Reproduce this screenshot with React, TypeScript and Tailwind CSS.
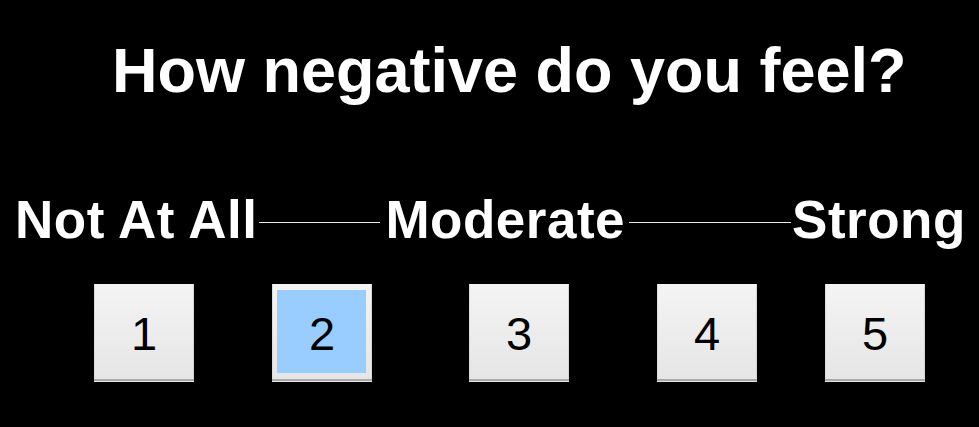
const SCALE = [
  { n: 1, cls: 'ml-[94px]', selected: false },
  { n: 2, cls: 'ml-[78px]', selected: true },
  { n: 3, cls: 'ml-[97px]', selected: false },
  { n: 4, cls: 'ml-[88px]', selected: false },
  { n: 5, cls: 'ml-[68px]', selected: false },
]

function RatingButton({ n, selected }: { n: number; selected: boolean }) {
  return (
    <button
      className="relative w-[100px] h-[98px] bg-gradient-to-b from-[#f4f4f4] to-[#e5e5e5] shadow-[inset_0_-1px_0_#e2e2e2,inset_0_-3px_0_#a9a9a9,inset_1px_0_0_#dcdcdc,inset_-1px_0_0_#d6d6d6] flex items-center justify-center"
    >
      {selected && (
        <div className="absolute left-[5px] right-[6px] top-[6px] bottom-[9px] bg-[#99ccff]" />
      )}
      <span className="relative text-[47px] leading-none text-black font-['Liberation_Sans',Arial,sans-serif]">
        {n}
      </span>
    </button>
  )
}

export default function App() {
  return (
    <div className="w-[979px] h-[427px] bg-black overflow-hidden font-['Liberation_Sans',Arial,sans-serif]">
      {/* Question */}
      <div className="pt-[39px] pl-[112px]">
        <h1 className="text-[63px] leading-none font-bold text-white whitespace-nowrap">
          How negative do you feel?
        </h1>
      </div>

      {/* Anchors */}
      <div className="mt-[91px] pl-[15px] flex items-start text-white text-[53px] leading-none font-bold tracking-[0.5px]">
        <span>Not At All</span>
        <div className="ml-[2px] mt-[29px] w-[121px] h-px bg-[#e8e8e8]" />
        <span className="ml-[5px]">Moderate</span>
        <div className="ml-[4px] mt-[29px] w-[162px] h-px bg-[#e8e8e8]" />
        <span className="ml-[1px]">Strong</span>
      </div>

      {/* Scale buttons */}
      <div className="mt-[38px] flex items-start">
        {SCALE.map(({ n, cls, selected }) => (
          <div key={n} className={cls}>
            <RatingButton n={n} selected={selected} />
          </div>
        ))}
      </div>
    </div>
  )
}
